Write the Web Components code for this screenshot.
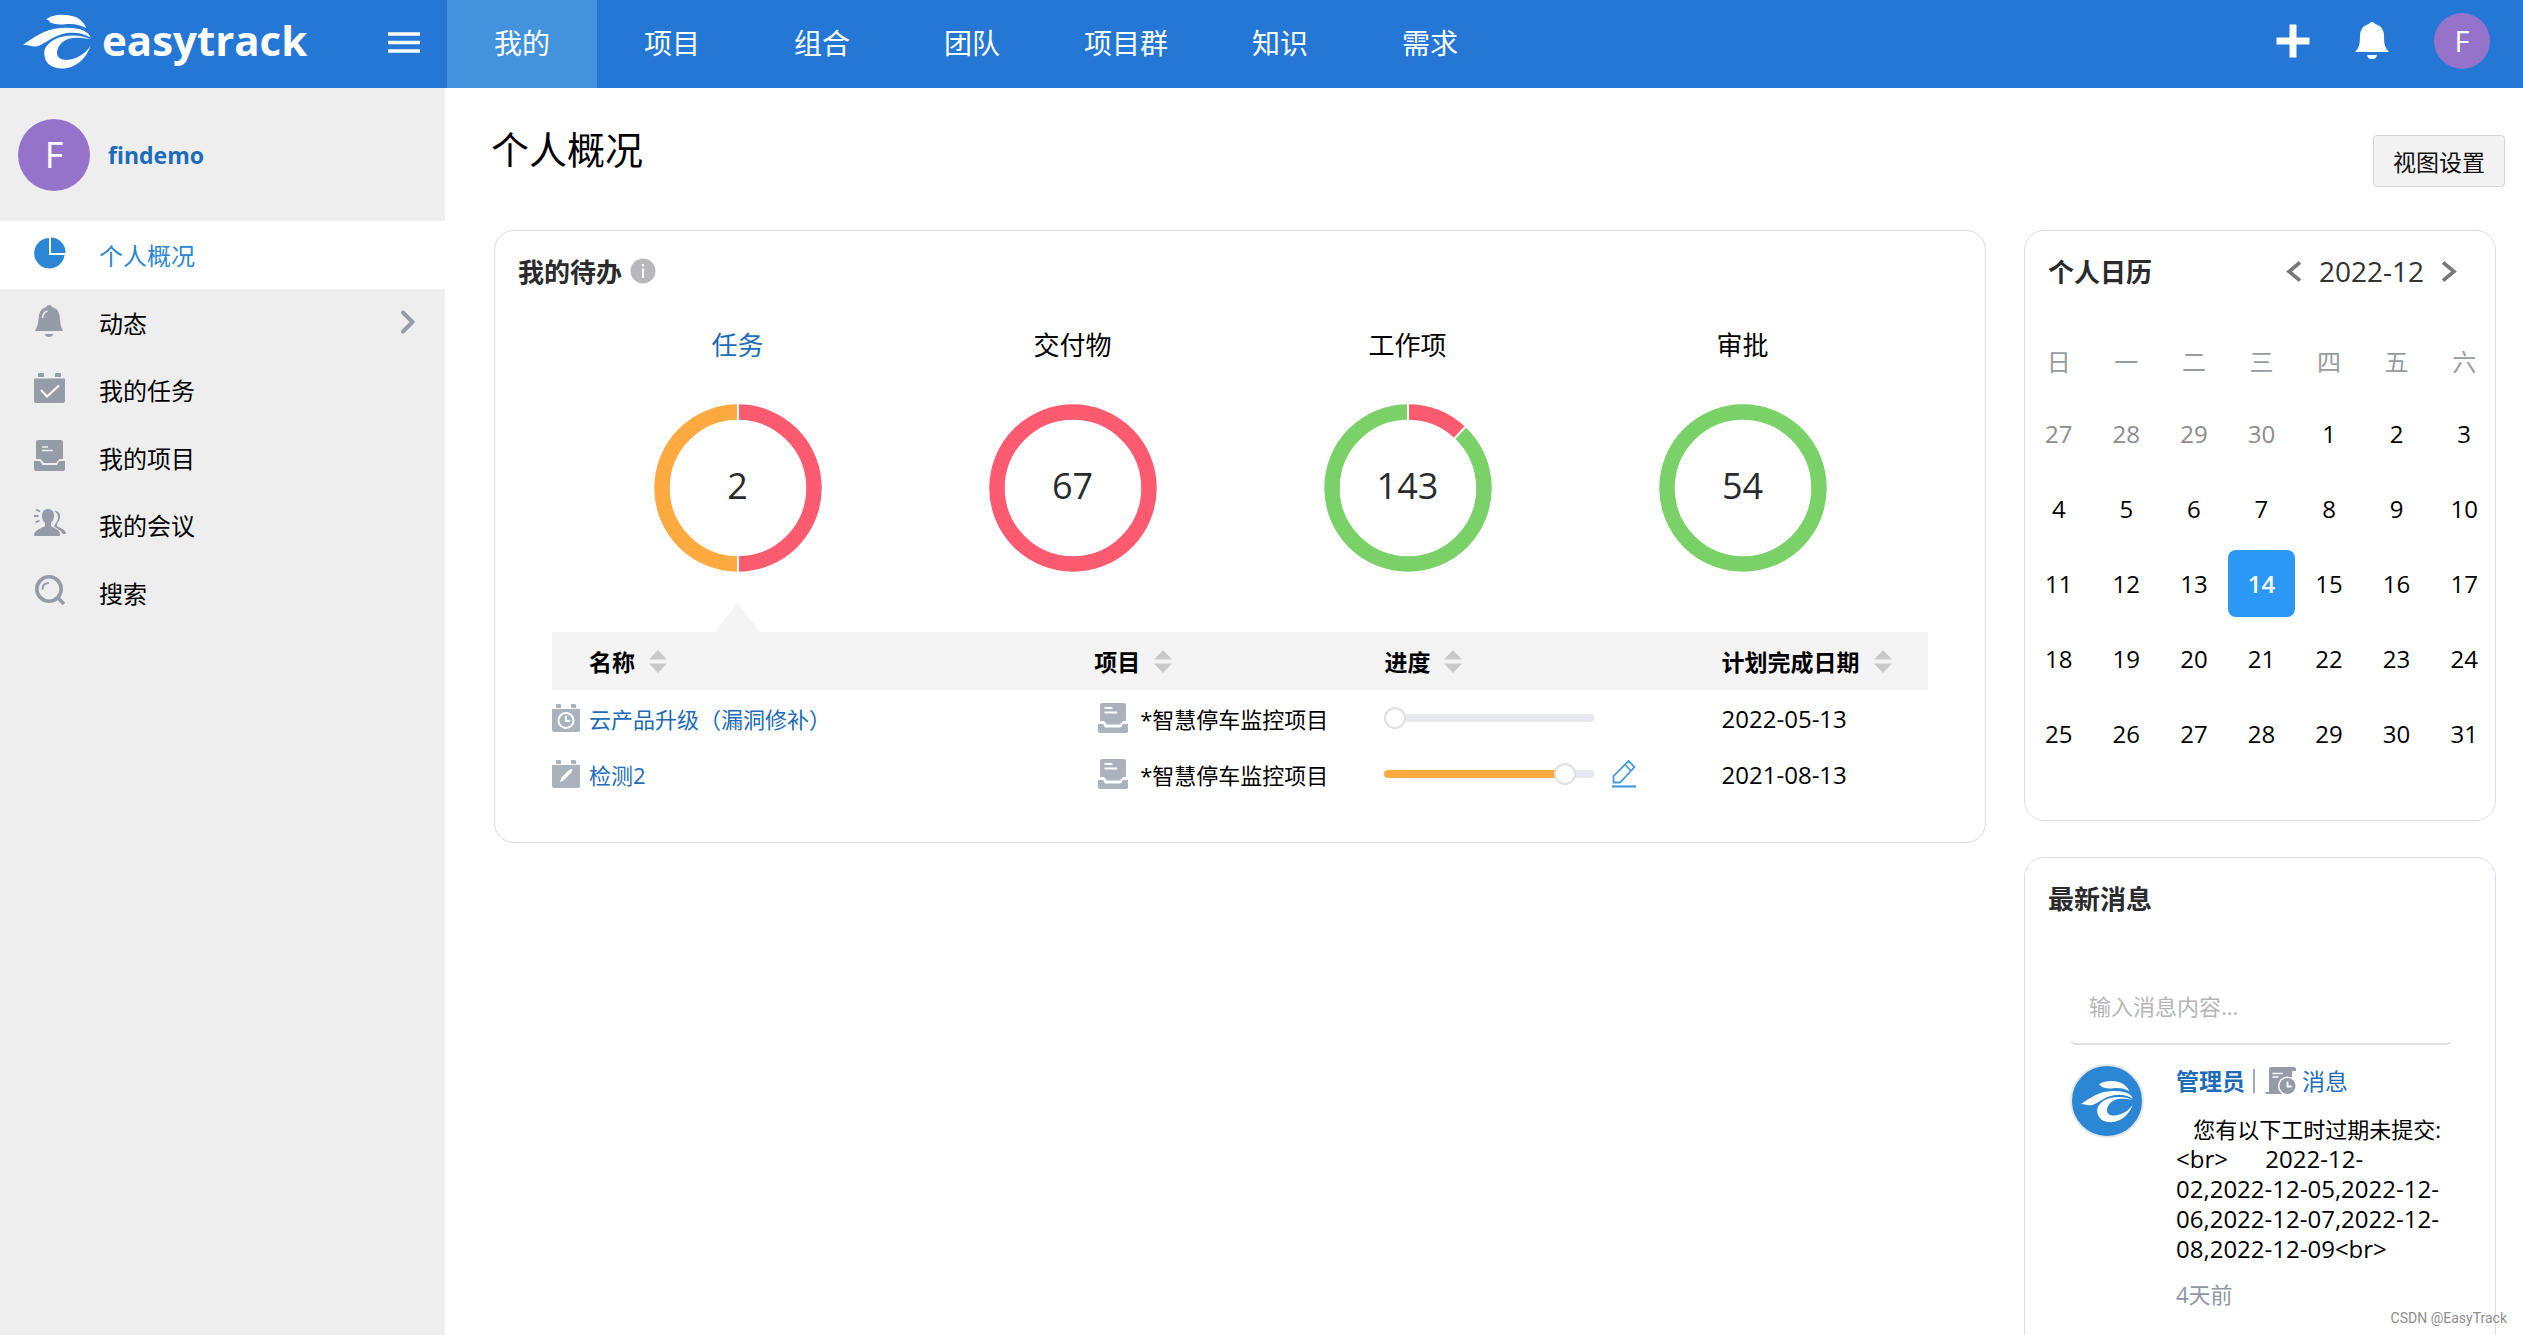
<!DOCTYPE html>
<html lang="zh-CN">
<head>
<meta charset="utf-8">
<title>个人概况 - easytrack</title>
<style>
  html, body { margin: 0; height: 100%; }
  body {
    font-family: "Open Sans", "Noto Sans CJK SC", sans-serif;
    font-size: 23px; color: #000; background: #fff;
    --blue: #1c6cb9; --brand: #2477d4; --line: #d9dde6; --grey: #969ba8;
  }
</style>
</head>
<body>
<et-app>
  <et-topbar slot="top"></et-topbar>
  <et-sidebar slot="side">
    <et-nav-item icon="pie" active>个人概况</et-nav-item>
    <et-nav-item icon="bell" more>动态</et-nav-item>
    <et-nav-item icon="task">我的任务</et-nav-item>
    <et-nav-item icon="project">我的项目</et-nav-item>
    <et-nav-item icon="people">我的会议</et-nav-item>
    <et-nav-item icon="search">搜索</et-nav-item>
  </et-sidebar>
  <et-page-head>个人概况</et-page-head>
  <et-columns>
    <et-card>
      <span slot="title">我的待办</span>
      <et-icon slot="title" name="info"></et-icon>
      <et-todo></et-todo>
    </et-card>
    <et-card slot="aside">
      <span slot="title">个人日历</span>
      <et-month slot="tools">2022-12</et-month>
      <et-calendar></et-calendar>
    </et-card>
    <et-card slot="aside" class="tall">
      <span slot="title">最新消息</span>
      <et-messages></et-messages>
    </et-card>
  </et-columns>
</et-app>

<script>
const ICONS = {
  logo: [68, 55, '24 26 204 164', '<g fill="currentColor"><path d="M94 42C110 26 150 24 180 34 198 42 208 54 214 68 198 58 175 53 150 56 130 59 112 54 104 50 106 47 100 44 94 42Z"/><path d="M24 118C60 95 90 68 150 67 195 66 222 78 227 97 205 83 175 77 140 86 105 96 82 121 62 123 50 124 38 118 24 118Z"/><path d="M227 102C198 86 150 86 120 101 95 115 86 130 88 148 90 175 112 189 140 189 185 189 215 155 226 122 210 145 185 160 160 163 140 165 126 158 126 142 127 118 150 98 180 97 200 97 215 99 227 102Z"/></g>'],
  plus: [34, 34, '0 0 34 34', '<path d="M17 0.500V33.500M0.500 17H33.500" stroke="currentColor" stroke-width="7"/>'],
  menu: [32, 22, '0 0 32 22', '<path d="M0 2H32M0 10.500H32M0 19H32" stroke="currentColor" stroke-width="3.500"/>'],
  bellTop: [34, 38, '0 0 34 38', '<path fill="currentColor" d="M17 0c2 0 2.500 1 3 2 6 1.500 9 6 9 12 0 8 1 12 5 16H0c4-4 5-8 5-16C5 8 8 3.500 14 2c.5-1 1-2 3-2ZM12 33h10c-.5 3-2.500 4-5 4s-4.500-1-5-4Z"/>'],
  pie: [32, 32, '0 0 32 32', '<path fill="currentColor" d="M15 1A15.200 15.200 0 1 0 30.500 18H15ZM17 .5A15 15 0 0 1 31.500 16H17Z"/>'],
  bell: [32, 34, '0 0 32 34', '<path fill="currentColor" d="M15 1c1.500 0 2.500.8 3 2 6 1.500 7.500 6 8 12 .4 6 1.500 9 3 12H1c1.500-3 3-6 3.500-12C5 9 6.500 4.500 12.500 3c.5-1.200 1.200-2 2.500-2ZM10.500 30h9c-1 2-2.500 3-4.500 3s-3.500-1-4.500-3Z"/><path d="M8.500 14c.3-4 1.500-6 5-7" fill="none" stroke="#eee" stroke-width="1.600"/>'],
  task: [32, 32, '0 0 32 32', '<path fill="currentColor" d="M5 1h4q1 0 1 1v3H4V2q0-1 1-1ZM22 1h4q1 0 1 1v3h-6V2q0-1 1-1ZM0 6.500H31V29q0 2-2 2H2q-2 0-2-2Z"/><path d="M7 18l6 6.500L25 13.500" fill="none" stroke="#fff" stroke-width="2"/>'],
  project: [32, 32, '0 0 32 32', '<path fill="currentColor" d="M4 0H27q2 0 2 2V19H25.500L22 23H10L6.500 19H2V2Q2 0 4 0ZM0 21H6l2.500 4H23l2-4H31v8q0 2-2 2H2q-2 0-2-2Z"/><path d="M8 7h6M8 10.500H19" stroke="#eee" stroke-width="1.500"/>'],
  people: [32, 28, '0 0 32 28', '<path fill="currentColor" d="M14 0c4 0 6 3 6 7 0 3-1.500 5-3 7v3c2 2 9 3 9 8v1q0 1-1 1H1q-1 0-1-1c0-5 8-7 11-9v-3C9 12 8 9.500 8 7c0-4 2-7 6-7ZM20 2c5-.5 6.500 3 6 7-.3 2.500-2 4-3 6v2c4 2.500 9 3.500 9 8h-3.500c-1-3.500-5-5-8.500-7.500 1-3 4-5 4-9 0-3-1-5-4-6.500Z"/><path d="M2 0.500l4 2M0 7h4.500M1.500 13.500l4-2" stroke="currentColor" stroke-width="1.800"/>'],
  search: [32, 32, '0 0 32 32', '<g fill="none" stroke="currentColor"><circle cx="15" cy="14" r="12.200" stroke-width="3.600"/><path d="M24 23l6 6" stroke-width="3.600"/><path d="M8.500 14.500c0-4 2.500-6.500 6.500-6.500" stroke-width="2.200"/></g>'],
  right: [14, 24, '0 0 14 24', '<path d="M2 2.500L11.500 12 2 21.500" fill="none" stroke="currentColor" stroke-width="4" stroke-linecap="round"/>'],
  prev: [15, 21, '0 0 15 21', '<path d="M14 1.500L3 10.500 14 19.500" fill="none" stroke="currentColor" stroke-width="3.600"/>'],
  next: [15, 21, '0 0 15 21', '<path d="M1 1.500L12 10.500 1 19.500" fill="none" stroke="currentColor" stroke-width="3.600"/>'],
  info: [26, 26, '0 0 26 26', '<circle cx="13" cy="13" r="12.500" fill="#b8b8ba"/><path d="M13 10.500V20M13 6v2.500" stroke="#fff" stroke-width="2"/>'],
  clock: [28, 28, '0 0 28 28', '<path fill="#aab3bb" d="M5 0h3q1 0 1 1v3H4V1q0-1 1-1ZM20 0h3q1 0 1 1v3h-5V1q0-1 1-1ZM0 5H28V26q0 2-2 2H2q-2 0-2-2Z"/><circle cx="14" cy="16.500" r="7.500" fill="none" stroke="#fff" stroke-width="2"/><path d="M14 12v5h4" fill="none" stroke="#fff" stroke-width="2"/>'],
  pencilBox: [28, 28, '0 0 28 28', '<path fill="#aab3bb" d="M5 0h3q1 0 1 1v3H4V1q0-1 1-1ZM20 0h3q1 0 1 1v3h-5V1q0-1 1-1ZM0 5H28V26q0 2-2 2H2q-2 0-2-2Z"/><path fill="#fff" d="M8 22l1.500-4.500L16 11l3-2q1.500-.5 1.500 1l-2 3.500L11.500 20.500Z"/>'],
  box: [30, 30, '0 0 30 30', '<path fill="#aab3bb" d="M4 0H26q2 0 2 2V18H25l-3 3.500H9L6 18H2V2Q2 0 4 0ZM0 21H5l2 3.500H23l2-3.500H30v7q0 2-2 2H2q-2 0-2-2Z"/><path d="M6.500 5h8M6.500 9.500H19" stroke="#fff" stroke-width="1.800"/>'],
  sort: [18, 23, '0 0 18 23', '<path fill="#c9c9c9" d="M9 0l9 9.500H0ZM0 13.500H18L9 23Z"/>'],
  edit: [24, 30, '0 0 24 30', '<g fill="none" stroke="#4a9ade" stroke-width="1.800"><path d="M16.500 2l6 6L8 23.500H1.500V17ZM13 5.500l6 6.500"/><path d="M0 27.500H24" stroke-width="2.200"/></g>'],
  scroll: [31, 28, '0 0 31 28', '<path fill="#969ba8" d="M6 0H29q2 0 2 2v2H27V27H2q-2 0-2-2H4V3Q4 0 6 0Z"/><path d="M7.500 6.500H18M7.500 10h6" stroke="#fff" stroke-width="1.500"/><circle cx="22.500" cy="19" r="9.500" fill="#fff"/><circle cx="22.500" cy="19" r="8" fill="#969ba8"/><path d="M22.500 14.500V19.500h4" fill="none" stroke="#fff" stroke-width="1.800"/>']
};

function define(name, css, html) {
  const tpl = document.createElement('template');
  customElements.define(name, class extends HTMLElement {
    connectedCallback() {
      if (this.shadowRoot) return;
      tpl.innerHTML = '<style>*,:host{box-sizing:border-box}button{display:flex;font:inherit;color:inherit;background:none;border:0;padding:0;cursor:pointer}a{color:inherit;text-decoration:none}' + css + '</style>' + (typeof html === 'function' ? html(this) : html);
      this.attachShadow({ mode: 'open' }).append(tpl.content.cloneNode(true));
    }
  });
}

define('et-icon', ':host{display:inline-flex;flex:none}svg{display:block}', el => {
  const [w, h, box, body] = ICONS[el.getAttribute('name')];
  return `<svg width="${el.getAttribute('w') || w}" height="${el.getAttribute('h') || h}" viewBox="${box}" aria-hidden="true">${body}</svg>`;
});

define('et-avatar', `
  :host{display:flex;flex:none;align-items:center;justify-content:center;width:56px;height:56px;border-radius:50%;background:#9673ca;color:#fff;font-size:29px;font-weight:400}
  :host([large]){width:72px;height:72px;font-size:36px}`, '<slot></slot>');

define('et-app', `
  :host{display:grid;grid-template:88px 1fr / 445px 1fr;height:100vh;overflow:hidden}
  header{grid-column:1/-1}
  main{min-width:0;overflow:hidden}
  .mark{position:absolute;right:16px;bottom:7px;font:14px/20px Roboto,sans-serif;color:#8d8d8d}`,
  `<header><slot name="top"></slot></header><slot name="side"></slot><main><slot></slot></main><div class="mark">CSDN @EasyTrack</div>`);

define('et-topbar', `
  :host{display:flex;height:88px;background:var(--brand);color:#fff}
  .brand{display:flex;align-items:center;width:447px;padding:0 27px 2px 23px}
  .logo{display:flex;align-items:center;gap:11px;font-size:42px;font-weight:700;line-height:60px;margin-right:auto}
  .logo et-icon{margin-top:-4px}.logo span{margin-top:-6px}
  nav{display:flex;flex:1}
  nav a{display:flex;align-items:center;justify-content:center;min-width:150px;padding:0 37px 4px;font-size:28px}
  nav a[aria-current]{background:#4292dc}
  .tools{display:flex;align-items:center;gap:45px;padding:0 33px 7px 0}`,
  `<div class="brand"><a class="logo" href="#"><et-icon name="logo"></et-icon><span>easytrack</span></a>
   <button aria-label="菜单"><et-icon name="menu"></et-icon></button></div>
   <nav><a href="#" aria-current="page">我的</a><a href="#">项目</a><a href="#">组合</a><a href="#">团队</a><a href="#">项目群</a><a href="#">知识</a><a href="#">需求</a></nav>
   <div class="tools"><button aria-label="新建"><et-icon name="plus"></et-icon></button><button aria-label="通知"><et-icon name="bellTop"></et-icon></button><et-avatar>F</et-avatar></div>`);

define('et-sidebar', `
  :host{display:block;background:#eee}
  .user{display:flex;align-items:center;gap:18px;height:133px;padding:0 18px;color:var(--blue);font-weight:700}
  nav{display:grid;grid-auto-rows:1fr;height:405px}`,
  `<a class="user" href="#"><et-avatar large>F</et-avatar>findemo</a><nav><slot></slot></nav>`);

define('et-nav-item', `
  :host{display:block}
  a{display:flex;align-items:center;height:100%;padding:0 30px 0 34px;font-size:24px}
  .i{display:flex;width:65px;color:var(--grey);padding-bottom:3px}
  .m{margin-left:auto;color:var(--grey)}
  :host([active]){background:#fff;color:#2b87d3}
  :host([active]) .i{color:#2b87d3}`,
  el => `<a href="#"><span class="i"><et-icon name="${el.getAttribute('icon')}"></et-icon></span><slot></slot>${el.hasAttribute('more') ? '<et-icon class="m" name="right"></et-icon>' : ''}</a>`);

define('et-page-head', `
  :host{display:flex;align-items:flex-start;justify-content:space-between;height:142px;padding:34px 18px 0 46px}
  h1{margin:0;font-size:38px;font-weight:400;line-height:54px}
  button{align-items:center;height:52px;margin-top:13px;padding:0 19px;border:1px solid #d4d4d4;border-radius:4px;background:#f3f3f3;color:#111}`,
  `<h1><slot></slot></h1><button>视图设置</button>`);

define('et-columns', `
  :host{display:grid;grid-template-columns:1fr 472px;gap:38px;align-items:start;padding:0 27px 0 49px}
  .aside{display:grid;gap:36px}`,
  `<div><slot></slot></div><div class="aside"><slot name="aside"></slot></div>`);

define('et-card', `
  :host{display:block;border:1px solid var(--line);border-radius:20px;background:#fff}
  :host(.tall){min-height:520px}
  header{display:flex;align-items:center;justify-content:space-between;height:80px;padding:0 38px 0 23px}
  h2{display:flex;align-items:center;gap:8px;margin:0;font-size:26px;font-weight:700;color:#2a2b2d}`,
  `<header><h2><slot name="title"></slot></h2><slot name="tools"></slot></header><slot></slot>`);

define('et-donut', `
  :host{display:block}
  button{flex-direction:column;align-items:center;width:100%}
  .t{font-size:26px;line-height:40px;margin-bottom:39px}
  :host([active]) .t{color:var(--blue)}
  .ring{display:grid;place-items:center;width:168px;height:168px}
  .ring>*{grid-area:1/1}
  b{font-weight:400;font-size:36px;line-height:40px;color:#2a2b2d;padding-bottom:4px}`,
  el => {
    const parts = el.getAttribute('parts').split(' ').map(p => p.split(':'));
    let at = 0, arcs = '', cuts = '';
    for (const [n, c] of parts) {
      arcs += `<circle cx="84" cy="84" r="76" pathLength="100" fill="none" stroke="${c}" stroke-width="15.500" stroke-dasharray="${n} ${100 - n}" stroke-dashoffset="${-at}" transform="rotate(-90 84 84)"/>`;
      if (parts.length > 1) cuts += `<path d="M84 0V17" stroke="#fff" stroke-width="2" transform="rotate(${at * 3.6} 84 84)"/>`;
      at += +n;
    }
    return `<button><span class="t"><slot></slot></span><span class="ring"><svg width="168" height="168" aria-hidden="true">${arcs}${cuts}</svg><b>${el.getAttribute('total')}</b></span></button>`;
  });

define('et-progress', `
  :host{display:flex;align-items:center;gap:18px}
  input{appearance:none;-webkit-appearance:none;width:210px;height:24px;margin:0;background:none}
  input::-webkit-slider-runnable-track{height:8px;border-radius:4px;background:linear-gradient(90deg,#ffaa40 var(--v),#e7e8ed var(--v))}
  input::-webkit-slider-thumb{-webkit-appearance:none;width:22px;height:22px;margin-top:-7px;border-radius:50%;background:#fff;border:2px solid #e0e0e0}`,
  el => `<input type="range" aria-label="进度" value="${el.getAttribute('value')}" style="--v:${el.getAttribute('value')}%">${el.hasAttribute('editable') ? '<button aria-label="编辑"><et-icon name="edit"></et-icon></button>' : ''}`);

define('et-todo', `
  :host{display:block;padding:0 57px 40px}
  .rings{display:grid;grid-template-columns:repeat(4,1fr);padding:14px 18px 0}
  .tip{display:grid;grid-template-columns:repeat(4,1fr);padding:31px 18px 0;justify-items:center}
  .tip i{width:45px;height:29px;background:#f4f4f4;clip-path:polygon(50% 0,100% 100%,0 100%)}
  table{width:100%;border-collapse:collapse;table-layout:fixed}
  th,td{padding:0;text-align:left;height:56px}
  td{font-size:22px}
  th{height:58px;background:#f4f4f4;font-weight:700}
  th:first-child{padding-left:37px}
  th button{align-items:center;gap:14px}
  .c{display:flex;align-items:center;gap:9px}
  .c a{color:var(--blue)}
  .p{padding-left:4px;gap:12px}
  td.d{font-size:24px}`,
  () => {
    const th = (t, w) => `<th scope="col" style="width:${w}"><button>${t}<et-icon name="sort"></et-icon></button></th>`;
    const row = (i, n, v, d) => `<tr><td><span class="c"><et-icon name="${i}"></et-icon><a href="#">${n}</a></span></td><td><span class="c p"><et-icon name="box"></et-icon><span>*智慧停车监控项目</span></span></td><td><et-progress ${v}></et-progress></td><td class="d">${d}</td></tr>`;
    return `<div class="rings">
      <et-donut active total="2" parts="50:#ff5b70 50:#ffaa40">任务</et-donut>
      <et-donut total="67" parts="100:#ff5b70">交付物</et-donut>
      <et-donut total="143" parts="12:#ff5b70 88:#7ad168">工作项</et-donut>
      <et-donut total="54" parts="100:#7ad168">审批</et-donut></div>
      <div class="tip"><i></i></div>
      <table><thead><tr>${th('名称', '39.4%')}${th('项目', '21.1%')}${th('进度', '24.5%')}${th('计划完成日期', '15%')}</tr></thead><tbody>
      ${row('clock', '云产品升级（漏洞修补）', 'value="0"', '2022-05-13')}
      ${row('pencilBox', '检测2', 'value="90" editable', '2021-08-13')}</tbody></table>`;
  });

define('et-month', `
  :host{display:flex;align-items:center;gap:18px;font-size:28px;color:#333;line-height:40px}
  button{color:#777}`,
  `<button aria-label="上个月"><et-icon name="prev"></et-icon></button><slot></slot><button aria-label="下个月"><et-icon name="next"></et-icon></button>`);

define('et-calendar', `
  :host{display:block;padding:11px 0 45px}
  table{width:calc(100% + 3px);table-layout:fixed;border-collapse:separate;border-spacing:0 8px}
  th,td{padding:0;text-align:center;font-size:24px}
  th{height:62px;padding-bottom:2px;font-weight:400;color:#979ca0}
  button{width:100%;height:67px;border-radius:8px;align-items:center;justify-content:center}
  .out{color:#8d8d8d}.on{background:#2b98f5;color:#fff;font-weight:600}`,
  () => {
    let rows = '';
    for (let r = 0; r < 5; r++) {
      rows += '<tr>';
      for (let c = 0; c < 7; c++) {
        const n = r * 7 + c - 3, out = n < 1;
        rows += `<td><button class="${out ? 'out' : n === 14 ? 'on' : ''}">${out ? 30 + n : n}</button></td>`;
      }
      rows += '</tr>';
    }
    return `<table><thead><tr>${[...'日一二三四五六'].map(d => `<th scope="col">${d}</th>`).join('')}</tr></thead><tbody>${rows}</tbody></table>`;
  });

define('et-messages', `
  :host{display:block;padding:31px 43px 0 45px;font-size:22px}
  textarea{display:block;width:100%;height:76px;padding:19px;border:0;border-bottom:2px solid #dcdfe2;border-radius:6px;font:inherit;line-height:36px;resize:none;overflow:hidden;background:none}
  textarea::placeholder{color:#b5b5b5}
  article{display:flex;gap:32px;padding-top:19px}
  .face{display:flex;flex:none;align-items:center;justify-content:center;width:74px;height:74px;border-radius:50%;background:#2b87d3;border:2px solid #e4e6e8;color:#fff}
  .who{display:flex;align-items:center;line-height:34px;color:var(--blue);font-size:23px}
  .who i{width:2px;height:24px;background:#a5abb5;margin:0 10px 0 8px}
  .who et-icon{margin-right:6px}
  p{margin:16px 0 0;line-height:30px;white-space:pre-wrap}
  p span{font-size:24px}
  time{display:block;margin-top:14px;line-height:32px;color:#8f96a5}`,
  `<textarea aria-label="消息内容" placeholder="输入消息内容..."></textarea>
   <article><div class="face"><et-icon name="logo" w="52" h="43"></et-icon></div>
   <div><div class="who"><a href="#"><b>管理员</b></a><i></i><et-icon name="scroll"></et-icon><a href="#">消息</a></div>
   <p>   您有以下工时过期未提交:<br><span>&lt;br&gt;      2022-12-<br>02,2022-12-05,2022-12-<br>06,2022-12-07,2022-12-<br>08,2022-12-09&lt;br&gt;</span></p>
   <time>4天前</time></div></article>`);
</script>
</body>
</html>
